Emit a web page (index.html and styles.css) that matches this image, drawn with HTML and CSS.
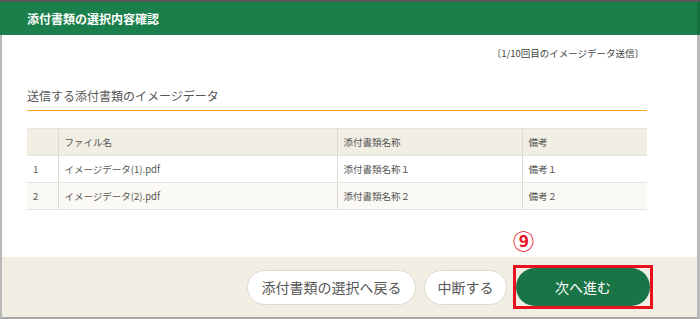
FILE: index.html
```html
<!DOCTYPE html>
<html lang="ja">
<head>
<meta charset="utf-8">
<link rel="stylesheet" href="styles.css">
</head>
<body>
<div class="modal">
  <div class="topline"></div>
  <div class="header"><h1 class="title">添付書類の選択内容確認</h1></div>
  <div class="main">
    <p class="note">〔1/10回目のイメージデータ送信〕</p>
    <h2 class="section-title">送信する添付書類のイメージデータ</h2>
    <table class="files">
      <thead>
        <tr><th class="c-no"></th><th class="c-name">ファイル名</th><th class="c-doc">添付書類名称</th><th class="c-memo">備考</th></tr>
      </thead>
      <tbody>
        <tr><td>1</td><td>イメージデータ(1).pdf</td><td>添付書類名称１</td><td>備考１</td></tr>
        <tr class="alt"><td>2</td><td>イメージデータ(2).pdf</td><td>添付書類名称２</td><td>備考２</td></tr>
      </tbody>
    </table>
  </div>
  <div class="footer">
    <button class="btn btn-white btn-back">添付書類の選択へ戻る</button>
    <button class="btn btn-white btn-stop">中断する</button>
    <div class="highlight">
      <span class="marker">⑨</span>
      <button class="btn btn-green">次へ進む</button>
    </div>
  </div>
</div>
</body>
</html>
```

FILE: styles.css
```css
* { box-sizing: border-box; }
html, body { margin: 0; padding: 0; background: #ffffff; }
body {
  font-family: "Noto Sans CJK JP", "Noto Sans", sans-serif;
  width: 700px;
  height: 319px;
  overflow: hidden;
}
.modal { width: 700px; }
.topline { height: 2px; background: #585858; }
.header {
  height: 33px;
  background: #1a7f4b;
  padding-left: 27px;
  border-right: 3px solid #17703f;
}
.title {
  margin: 0;
  font-size: 12px;
  font-weight: bold;
  line-height: 33px;
  color: #ffffff;
}
.main {
  height: 222px;
  border-left: 2px solid #b9b9b9;
  border-right: 3px solid #b9b9b9;
  padding: 11px 50px 0 25px;
}
.note {
  margin: 0;
  text-align: right;
  font-size: 9.5px;
  line-height: 14px;
  color: #444444;
  padding-right: 3px;
}
.section-title {
  margin: 27px 0 0 0;
  font-size: 12px;
  font-weight: normal;
  line-height: 18px;
  color: #555555;
  padding-bottom: 5px;
  border-bottom: 1px solid #f4a425;
}
.files {
  margin-top: 17px;
  width: 620px;
  border-collapse: collapse;
  font-size: 9.5px;
  color: #555555;
  table-layout: fixed;
}
.files th, .files td {
  height: 27px;
  padding: 0 0 0 6px;
  text-align: left;
  font-weight: normal;
  border-bottom: 1px solid #e7e4db;
  border-left: 1px solid #dcd9d0;
}
.files th:first-child, .files td:first-child { border-left: none; }
.files thead tr { background: #f1eee4; }
.files thead th { border-top: 1px solid #e7e4db; }
.files tr.alt { background: #fbf9f3; }
.c-no { width: 31px; }
.c-name { width: 279px; }
.c-doc { width: 185px; }
.c-memo { width: 125px; }
.footer {
  height: 62px;
  background: #f1eee3;
  border-left: 2px solid #b9b9b9;
  border-right: 3px solid #b9b9b9;
  border-bottom: 2px solid #a9a9a9;
  display: flex;
  justify-content: flex-end;
  align-items: center;
  padding-right: 44px;
}
.btn {
  font-family: inherit;
  font-size: 14px;
  height: 35px;
  border-radius: 18px;
  cursor: pointer;
  padding: 0;
}
.btn-white {
  background: #ffffff;
  border: 1px solid #dedad0;
  color: #555555;
}
.btn-back { width: 169px; margin-right: 8px; }
.btn-stop { width: 83px; margin-right: 6px; }
.highlight {
  position: relative;
  border: 3px solid #e8111d;
  display: flex;
}
.marker {
  position: absolute;
  left: -3px;
  top: -40px;
  font-size: 21px;
  font-weight: bold;
  color: #e8111d;
  line-height: 24px;
}
.btn-green {
  width: 134px;
  height: 38px;
  border: none;
  border-radius: 19px;
  background: #1a7546;
  color: #ffffff;
}
```
